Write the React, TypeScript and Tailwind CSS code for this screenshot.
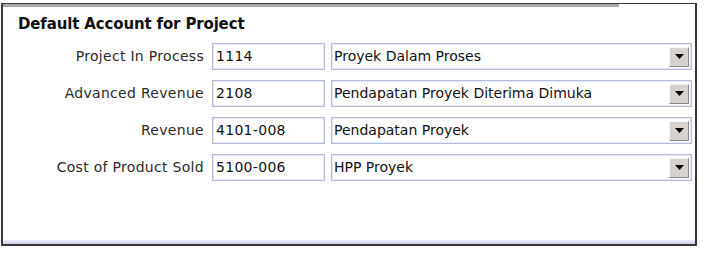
import React from "react";

const rows = [
  { label: "Project In Process", code: "1114", name: "Proyek Dalam Proses" },
  { label: "Advanced Revenue", code: "2108", name: "Pendapatan Proyek Diterima Dimuka" },
  { label: "Revenue", code: "4101-008", name: "Pendapatan Proyek" },
  { label: "Cost of Product Sold", code: "5100-006", name: "HPP Proyek" },
];

const font = { fontFamily: '"DejaVu Sans", Verdana, sans-serif' };

function DropButton() {
  return (
    <div className="w-[20px] h-[20px] bg-[#d6d3ce] border border-t-[#f4f4f4] border-l-[#f4f4f4] border-b-[#8a8a8a] border-r-[#8a8a8a] flex items-center justify-center">
      <svg width="9" height="5" viewBox="0 0 9 5">
        <polygon points="0,0 9,0 4.5,5" fill="#000" />
      </svg>
    </div>
  );
}

export default function App() {
  return (
    <div className="w-[705px] h-[254px] bg-white pt-[3px] pl-[1px]" style={font}>
      <div className="w-[696px] h-[243px] border-2 border-[#3a3a3a] border-t-[1px] flex flex-col">
        <div className="h-[3px] w-[616px] bg-[#a9a9a9]" />
        <div className="flex-1 flex flex-col">
          <div className="pl-[15px] pt-[8px] h-[36px] text-[15px] leading-[18px] font-bold text-[#111] tracking-[-0.15px]">
            Default Account for Project
          </div>
          <div className="flex flex-col gap-[10px]">
            {rows.map((r) => (
              <div key={r.label} className="flex items-center h-[27px]">
                <div className="w-[209px] pr-[8px] text-right text-[14px] text-[#2a2a2a] tracking-[0.3px]">
                  {r.label}
                </div>
                <div className="w-[113px] h-[27px] border border-[#b4bbe0] shadow-[inset_0_0_0_1px_#e6e8f5] flex items-center pl-[3px] text-[14px] text-[#111] tracking-[0.3px]">
                  {r.code}
                </div>
                <div className="ml-[6px] w-[361px] h-[27px] border border-[#b4bbe0] shadow-[inset_0_0_0_1px_#e6e8f5] flex items-center justify-between pl-[2px] pr-[2px] text-[14px] text-[#111] tracking-[0px]">
                  <span>{r.name}</span>
                  <DropButton />
                </div>
              </div>
            ))}
          </div>
        </div>
        <div className="h-[4px] bg-gradient-to-b from-[#eceef8] to-[#cdd1ea]" />
      </div>
    </div>
  );
}
